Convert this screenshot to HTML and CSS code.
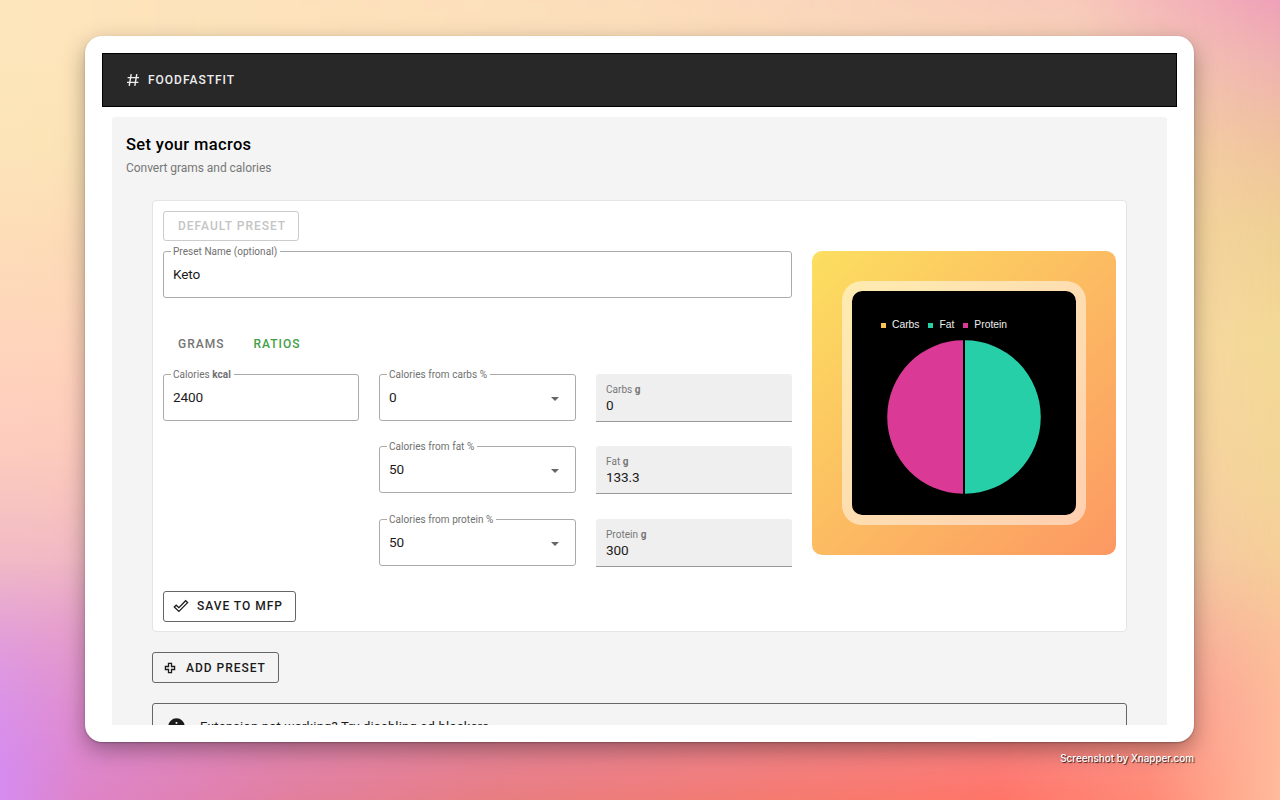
FILE: index.html
```html
<!DOCTYPE html>
<html lang="en">
<head>
<meta charset="utf-8">
<title>FoodFastFit</title>
<link rel="stylesheet" href="styles.css">
</head>

<body>
<div id="window">
	<div id="screen">
		<div id="header">
			<svg width="14" height="14" viewBox="0 0 14 14"><path d="M5.2 1.2L3.2 12.8M10.8 1.2L8.8 12.8M1.6 4.6H13M1 9.4H12.4" /></svg>
			<span class="brand">FOODFASTFIT</span>
		</div>
		<div id="main">
			<h1>Set your macros</h1>
			<p class="sub">Convert grams and calories</p>
			<div id="content">
				<div class="card">
					<button class="btn disabled">DEFAULT PRESET</button>
					<div class="cols">
						<div class="form">
							<div class="field"><label>Preset Name (optional)</label><span>Keto</span></div>
							<div class="tabs">
								<a>GRAMS</a>
								<a class="active">RATIOS</a>
							</div>
							<div class="grid">
								<div class="field"><label>Calories <b>kcal</b></label><span>2400</span></div>
								<div class="field select"><label>Calories from carbs %</label><span>0</span><i></i></div>
								<div class="filled"><label>Carbs <b>g</b></label><span>0</span></div>
								<div class="field select fat"><label>Calories from fat %</label><span>50</span><i></i></div>
								<div class="filled"><label>Fat <b>g</b></label><span>133.3</span></div>
								<div class="field select protein"><label>Calories from protein %</label><span>50</span><i></i></div>
								<div class="filled"><label>Protein <b>g</b></label><span>300</span></div>
							</div>
						</div>
						<div class="chart">
							<div class="chart_box">
								<ul>
									<li class="c1">Carbs</li>
									<li class="c2">Fat</li>
									<li class="c3">Protein</li>
								</ul>
								<svg width="154" height="154" viewBox="0 0 154 154">
									<path d="M76 .3A75.8 76.7 0 0 0 76 153.7Z" fill="#da3a96" />
									<path d="M78 .3A75.8 76.7 0 0 1 78 153.7Z" fill="#26cfa7" />
								</svg>
							</div>
						</div>
					</div>
					<button class="btn save">
						<svg width="16" height="14" viewBox="0 0 16 14"><path d="M1.3 8L3.2 6.2L5.9 8.7L12.6 1.7L14.6 3.6L5.9 12.4Z" /></svg>
						SAVE TO MFP
					</button>
				</div>
				<button class="btn add">
					<svg width="12" height="12" viewBox="0 0 12 12"><path d="M4.5 1.4H7.5V4.5H10.6V7.5H7.5V10.6H4.5V7.5H1.4V4.5H4.5Z" /></svg>
					ADD PRESET
				</button>
				<div class="notice">
					<svg width="17" height="17" viewBox="0 0 17 17"><circle cx="8.5" cy="8.5" r="8.2" fill="#1b1b1b" /><path d="M8.5 4V5.7M8.5 7.4V13" stroke="#f4f4f4" stroke-width="1.7" /></svg>
					<span>Extension not working? Try disabling ad blockers.</span>
				</div>
			</div>
		</div>
	</div>
</div>
<div id="credit">Screenshot by Xnapper.com</div>
</body>
</html>
```
FILE: styles.css
```css
*{ margin:0; padding:0; box-sizing:border-box;}
li{ list-style:none;}
body{
	position:relative; width:1280px; height:800px; overflow:hidden; padding:36px 86px 0 85px;
	font-family:Roboto,"Liberation Sans",sans-serif; color:#1b1b1b;
	background:linear-gradient(180deg,#fee6bc 0,#fce4b8 150px,#fddbb8 250px,#ffd4bc 350px,#fdcbbe 450px,#f8c4c0 500px,#efb6c8 580px,#e8a6d0 650px,#e09ade 730px,#d58bf0 800px);
}
/* right side and bottom of the wallpaper, faded into the left one */
body:before,body:after{ content:""; position:absolute; left:0; top:0; width:100%; height:100%; z-index:-1;}
body:before{
	background:linear-gradient(180deg,#efa0b8 0,#efb2b0 60px,#f0c49c 150px,#f0d094 230px,#f3d996 340px,#f4d497 490px,#f7ca98 600px,#fbba98 700px,#ffb49c 800px);
	-webkit-mask-image:linear-gradient(90deg,transparent 0,rgba(0,0,0,.12) 50%,rgba(0,0,0,.4) 84%,rgba(0,0,0,.75) 93%,#000 100%);
	mask-image:linear-gradient(90deg,transparent 0,rgba(0,0,0,.12) 50%,rgba(0,0,0,.4) 84%,rgba(0,0,0,.75) 93%,#000 100%);
}
body:after{
	background:linear-gradient(90deg,#d58bf0 0,#de84c8 80px,#e27f9c 300px,#e87d80 500px,#f67a6e 800px,#ff7567 1000px,#ff8a75 1150px,#ffbb9c 1280px);
	-webkit-mask-image:linear-gradient(180deg,transparent 560px,rgba(0,0,0,.75) 742px,#000 800px);
	mask-image:linear-gradient(180deg,transparent 560px,rgba(0,0,0,.75) 742px,#000 800px);
}
html{ background:#fff;}
body{ z-index:0;}

#window{ width:1109px; height:706px; padding:17px; background:#fff; border-radius:17px; box-shadow:0 8px 22px rgba(0,0,0,.34),0 1px 2px rgba(0,0,0,.25);}
#screen{ height:672px; overflow:hidden;}

#header{ height:54px; padding-left:23px; background:#282828; border:1px solid #000; display:flex; align-items:center; gap:8px; color:#eee;}
#header svg{ fill:none; stroke:#eee; stroke-width:1.4;}
.brand{ font-size:12px; font-weight:500; letter-spacing:.98px;}

#main{ height:680px; margin:10px 10px 0; padding:18px 14px 0; background:#f4f4f4; border-radius:3px;}
h1{ font-size:16.5px; line-height:20px; font-weight:500; letter-spacing:.35px; color:#000;}
.sub{ margin-top:5px; font-size:12px; line-height:16px; letter-spacing:-.04px; color:#777;}

#content{ margin:24px 26px 0;}
.card{ height:432px; padding:10px; background:#fff; border:1px solid #e4e4e4; border-radius:4px;}
.cols{ display:flex; gap:20px; margin-top:10px;}
.form{ width:629px;}

.btn{ display:flex; align-items:center; height:31px; background:none; border:1px solid #666; border-radius:3px; font:500 12px Roboto,sans-serif; letter-spacing:.98px; color:#1b1b1b;}
.btn svg{ fill:none; stroke:#1b1b1b; stroke-width:1.3;}
.disabled{ width:136px; height:30px; padding-left:14px; border-color:#ccc; color:#c4c4c4;}
.save{ width:133px; margin-top:24px; padding-left:9px; gap:8px;}
.add{ width:127px; margin-top:20px; padding-left:11px; gap:10px;}

.field{ position:relative; height:47px; padding:0 9px; border:1px solid #aaa; border-radius:3px; line-height:45px; font-size:13.6px; letter-spacing:-.1px;}
.field label{ position:absolute; left:7px; top:-7px; padding:0 3px 0 2px; background:#fff; font-size:10px; line-height:14px; letter-spacing:.04px; color:#707070;}
.field i{ position:absolute; right:16px; top:22px; border:4px solid transparent; border-top-color:#666; border-bottom:0;}

.tabs{ display:flex; gap:29px; height:76px; padding:37px 0 0 15px; font-size:12px; line-height:18px; font-weight:500; letter-spacing:1px; color:#757575;}
.tabs .active{ color:#43a047;}

.grid{ display:grid; grid-template-columns:196px 197px 196px; column-gap:20px; row-gap:24.4px;}
.fat,.protein{ grid-column:2;}
.filled{ height:48px; padding:9px 10px 0; background:#efefef; border-bottom:1px solid #999; border-radius:3px 3px 0 0;}
.filled label{ display:block; font-size:10px; line-height:14px; letter-spacing:.04px; color:#777;}
.filled span{ display:block; font-size:13.6px; line-height:17px; letter-spacing:-.1px;}

.chart{ width:304px; height:304px; padding:30px; border-radius:10px; background:linear-gradient(135deg,#fcdf60,#fc9863);}
.chart_box{ width:244px; height:244px; padding:27px 0 0 29px; border:10px solid rgba(255,255,255,.5); border-radius:20px; background:#000; background-clip:padding-box;}
.chart_box ul{ display:flex; gap:9px; font:10.3px/14px "Liberation Sans",sans-serif; color:#eee;}
.chart_box li{ display:flex; align-items:center; gap:6px;}
.chart_box li:before{ content:""; width:5px; height:5px; background:#fdc54f;}
.chart_box .c2:before{ background:#26cfa7;}
.chart_box .c3:before{ background:#da3a96;}
.chart_box svg{ display:block; margin:8px 0 0 6px;}

.notice{ display:flex; align-items:center; gap:15px; height:47px; margin-top:20px; padding-left:15px; border:1px solid #666; border-radius:3px; font-size:13px; letter-spacing:.18px;}

#credit{ margin-top:9px; text-align:right; font:500 9.9px/14px Inter,sans-serif; color:#fff; text-shadow:1px 1px 1px rgba(0,0,0,.8);}
```
